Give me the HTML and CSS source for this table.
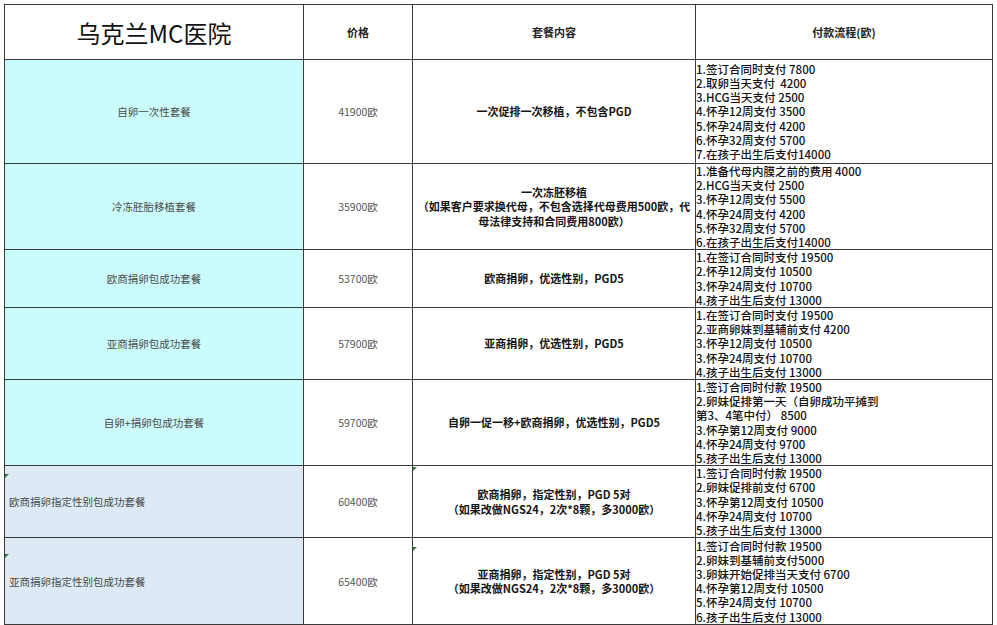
FILE: index.html
```html
<!DOCTYPE html>
<html lang="zh-CN">
<head>
<meta charset="utf-8">
<title>乌克兰MC医院</title>
<link rel="stylesheet" href="styles.css">
</head>
<body>
<div class="page">
<table class="price-table">
  <colgroup>
    <col class="c-name"><col class="c-price"><col class="c-content"><col class="c-pay">
  </colgroup>
  <tr class="r-head">
    <th class="title">乌克兰MC医院</th>
    <th class="hcell">价格</th>
    <th class="hcell">套餐内容</th>
    <th class="hcell">付款流程(欧)</th>
  </tr>
  <tr class="r1">
    <td class="name cyan">自卵一次性套餐</td>
    <td class="price">41900欧</td>
    <td class="content">一次促排一次移植，不包含PGD</td>
    <td class="pay">
      <span>1.签订合同时支付 7800</span>
      <span>2.取卵当天支付 &nbsp;4200</span>
      <span>3.HCG当天支付 2500</span>
      <span>4.怀孕12周支付 3500</span>
      <span>5.怀孕24周支付 4200</span>
      <span>6.怀孕32周支付 5700</span>
      <span>7.在孩子出生后支付14000</span>
    </td>
  </tr>
  <tr class="r2">
    <td class="name cyan">冷冻胚胎移植套餐</td>
    <td class="price">35900欧</td>
    <td class="content">一次冻胚移植<br>（如果客户要求换代母，不包含选择代母费用500欧，代<br>母法律支持和合同费用800欧）</td>
    <td class="pay">
      <span>1.准备代母内膜之前的费用 4000</span>
      <span>2.HCG当天支付 2500</span>
      <span>3.怀孕12周支付 5500</span>
      <span>4.怀孕24周支付 4200</span>
      <span>5.怀孕32周支付 5700</span>
      <span>6.在孩子出生后支付14000</span>
    </td>
  </tr>
  <tr class="r3">
    <td class="name cyan">欧商捐卵包成功套餐</td>
    <td class="price">53700欧</td>
    <td class="content">欧商捐卵，优选性别，PGD5</td>
    <td class="pay">
      <span>1.在签订合同时支付 19500</span>
      <span>2.怀孕12周支付 10500</span>
      <span>3.怀孕24周支付 10700</span>
      <span>4.孩子出生后支付 13000</span>
    </td>
  </tr>
  <tr class="r4">
    <td class="name cyan">亚商捐卵包成功套餐</td>
    <td class="price">57900欧</td>
    <td class="content">亚商捐卵，优选性别，PGD5</td>
    <td class="pay">
      <span>1.在签订合同时支付 19500</span>
      <span>2.亚商卵妹到基辅前支付 4200</span>
      <span>3.怀孕12周支付 10500</span>
      <span>3.怀孕24周支付 10700</span>
      <span>4.孩子出生后支付 13000</span>
    </td>
  </tr>
  <tr class="r5">
    <td class="name cyan">自卵+捐卵包成功套餐</td>
    <td class="price">59700欧</td>
    <td class="content">自卵一促一移+欧商捐卵，优选性别，PGD5</td>
    <td class="pay">
      <span>1.签订合同时付款 19500</span>
      <span>2.卵妹促排第一天（自卵成功平摊到</span>
      <span>第3、4笔中付） 8500</span>
      <span>3.怀孕第12周支付 9000</span>
      <span>4.怀孕24周支付 9700</span>
      <span>5.孩子出生后支付 13000</span>
    </td>
  </tr>
  <tr class="r6">
    <td class="name blue left"><div class="mark"></div>欧商捐卵指定性别包成功套餐</td>
    <td class="price">60400欧</td>
    <td class="content"><div class="mark"></div>欧商捐卵，指定性别，PGD 5对<br>（如果改做NGS24，2次*8颗，多3000欧）</td>
    <td class="pay">
      <span>1.签订合同时付款 19500</span>
      <span>2.卵妹促排前支付 6700</span>
      <span>3.怀孕第12周支付 10500</span>
      <span>4.怀孕24周支付 10700</span>
      <span>5.孩子出生后支付 13000</span>
    </td>
  </tr>
  <tr class="r7">
    <td class="name blue left"><div class="mark"></div>亚商捐卵指定性别包成功套餐</td>
    <td class="price">65400欧</td>
    <td class="content"><div class="mark"></div>亚商捐卵，指定性别，PGD 5对<br>（如果改做NGS24，2次*8颗，多3000欧）</td>
    <td class="pay">
      <span>1.签订合同时付款 19500</span>
      <span>2.卵妹到基辅前支付5000</span>
      <span>3.卵妹开始促排当天支付 6700</span>
      <span>4.怀孕第12周支付 10500</span>
      <span>5.怀孕24周支付 10700</span>
      <span>6.孩子出生后支付 13000</span>
    </td>
  </tr>
</table>
</div>
</body>
</html>
```
FILE: styles.css
```css
html, body {
  margin: 0;
  padding: 0;
  background: #ffffff;
}

body {
  font-family: "Noto Sans CJK SC", "Noto Sans", sans-serif;
  color: #111;
}

.page {
  padding: 4px 0 0 4px;
}

.price-table {
  border-collapse: collapse;
  table-layout: fixed;
  width: 988px;
}

.c-name { width: 299px; }
.c-price { width: 109px; }
.c-content { width: 283px; }
.c-pay { width: 297px; }

.price-table th,
.price-table td {
  border: 1px solid #3a3a3a;
  padding: 0;
  vertical-align: middle;
}

.r-head { height: 55px; }
.r1 { height: 104px; }
.r2 { height: 86px; }
.r3 { height: 57px; }
.r4 { height: 72px; }
.r5 { height: 86px; }
.r6 { height: 72px; }
.r7 { height: 87px; }

.title {
  font-size: 24px;
  font-weight: 400;
  color: #111;
  text-align: center;
}

.hcell {
  font-size: 11px;
  font-weight: 700;
  color: #222;
  text-align: center;
}

.name {
  font-size: 10.5px;
  color: #4a4a4a;
  text-align: center;
}

.name.left {
  text-align: left;
  padding-left: 4px;
}

.cyan { background: #cbfcfc; }
.blue { background: #ddeaf6; }

.price {
  font-size: 10.5px;
  color: #555;
  text-align: center;
}

.content {
  font-size: 11px;
  font-weight: 700;
  color: #151515;
  text-align: center;
  line-height: 14.5px;
}

.pay {
  font-size: 11.5px;
  font-weight: 500;
  color: #111;
  line-height: 14.2px;
  padding-left: 2px;
}

.pay span {
  display: block;
  white-space: nowrap;
}

.mark {
  float: left;
  width: 0;
  height: 0;
  margin: -20px 0 0 -4px;
  border-top: 4px solid #2e7d32;
  border-right: 4px solid transparent;
}

.content .mark {
  margin-left: 0;
}
```
